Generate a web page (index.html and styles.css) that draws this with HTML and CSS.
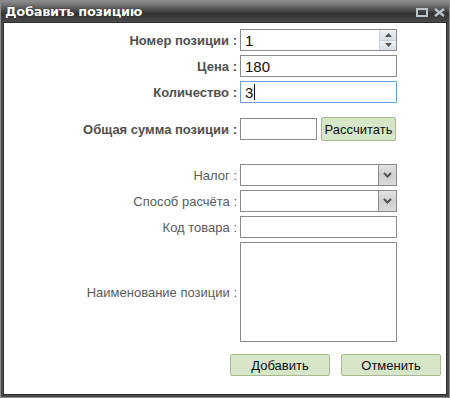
FILE: index.html
```html
<!DOCTYPE html>
<html lang="ru">
<head>
    <meta charset="UTF-8">
    <title>Добавить позицию</title>
    <link rel="stylesheet" href="styles.css">
</head>
<body>
<div class="window">
    <div class="title_bar">
        <span class="title">Добавить позицию</span>
        <span class="tools">
            <svg width="12" height="9" viewBox="0 0 12 9"><rect x="1" y="1" width="10" height="7" fill="none" stroke="#b9c3cc" stroke-width="2"/></svg>
            <svg width="11" height="9" viewBox="0 0 11 9"><path d="M1 1 L10 8 M10 1 L1 8" stroke="#b9c3cc" stroke-width="2.4"/></svg>
        </span>
    </div>
    <div class="panel">
        <div class="row">
            <label class="label strong">Номер позиции :</label>
            <div class="field spin_field">
                <span class="value">1</span>
                <div class="spinner">
                    <div class="spin_btn"><svg width="7" height="4"><path d="M0 4 L3.5 0 L7 4Z" fill="#555"/></svg></div>
                    <div class="spin_btn"><svg width="7" height="4"><path d="M0 0 L3.5 4 L7 0Z" fill="#555"/></svg></div>
                </div>
            </div>
        </div>
        <div class="row">
            <label class="label strong">Цена :</label>
            <div class="field"><span class="value">180</span></div>
        </div>
        <div class="row">
            <label class="label strong">Количество :</label>
            <div class="field focused"><span class="value">3</span><span class="caret"></span></div>
        </div>
        <div class="row row_total">
            <label class="label strong">Общая сумма позиции :</label>
            <div class="field small"></div>
            <div class="button calc">Рассчитать</div>
        </div>
        <div class="row row_tax">
            <label class="label">Налог :</label>
            <div class="field select">
                <div class="arrow"><svg width="9" height="6"><path d="M1 1 L4.5 4.5 L8 1" fill="none" stroke="#555" stroke-width="2"/></svg></div>
            </div>
        </div>
        <div class="row">
            <label class="label">Способ расчёта :</label>
            <div class="field select">
                <div class="arrow"><svg width="9" height="6"><path d="M1 1 L4.5 4.5 L8 1" fill="none" stroke="#555" stroke-width="2"/></svg></div>
            </div>
        </div>
        <div class="row">
            <label class="label">Код товара :</label>
            <div class="field"></div>
        </div>
        <div class="row">
            <label class="label">Наименование позиции :</label>
            <div class="field area"></div>
        </div>
        <div class="actions">
            <div class="button wide">Добавить</div>
            <div class="button wide">Отменить</div>
        </div>
    </div>
</div>
</body>
</html>
```

FILE: styles.css
```css
* {
    box-sizing: border-box;
}

body {
    margin: 0;
    font-family: "Liberation Sans", Arial, sans-serif;
}

.window {
    width: 450px;
    height: 398px;
    background: #4b4b4b;
    border: 1px solid #8a8a8a;
    display: flex;
    flex-direction: column;
}

.title_bar {
    height: 21px;
    display: flex;
    align-items: center;
    justify-content: space-between;
    padding: 0 4px 0 4px;
    background: linear-gradient(#8c8c8c, #5a5a5a 35%, #333 60%, #4a4a4a);
}

.title {
    color: white;
    font-family: "DejaVu Sans", sans-serif;
    font-weight: bold;
    font-size: 13px;
    letter-spacing: -0.3px;
    text-shadow: 0 0 1px #000;
}

.tools {
    display: flex;
    gap: 6px;
    align-items: center;
    padding-top: 2px;
}

.panel {
    flex: 1;
    margin: 0 2px 2px 2px;
    background: white;
    border: 1px solid #2e2e2e;
    padding-top: 6px;
    display: flex;
    flex-direction: column;
    gap: 4px;
}

.row {
    display: flex;
    align-items: center;
}

.row_total {
    margin-top: 10px;
}

.row_tax {
    margin-top: 19px;
}

.label {
    width: 234px;
    text-align: right;
    padding-right: 1px;
    margin-right: 2px;
    color: #5a5a5a;
    font-size: 13px;
}

.strong {
    font-weight: bold;
    color: #4f4f4f;
}

.field {
    position: relative;
    width: 157px;
    height: 22px;
    border: 1px solid #8a8a8a;
    background: white;
    display: flex;
    align-items: center;
    padding-left: 4px;
    font-size: 15px;
    color: #111;
}

.focused {
    border-color: #6f9fd8;
}

.caret {
    width: 1px;
    height: 16px;
    background: #000;
    margin-left: 1px;
}

.small {
    width: 77px;
}

.spinner {
    position: absolute;
    right: 0;
    top: 0;
    bottom: 0;
    width: 17px;
    display: flex;
    flex-direction: column;
    border-left: 1px solid #c8d0d8;
}

.spin_btn {
    flex: 1;
    display: flex;
    align-items: center;
    justify-content: center;
    background: linear-gradient(#eef2f6, #d6dde4);
    border-bottom: 1px solid #c8d0d8;
}

.spin_btn:last-child {
    border-bottom: none;
}

.select .arrow {
    position: absolute;
    right: 0;
    top: 0;
    bottom: 0;
    width: 18px;
    border-left: 1px solid #8a8a8a;
    background: linear-gradient(#e4e4e4, #cfcfcf 50%, #dadada);
    display: flex;
    align-items: center;
    justify-content: center;
}

.area {
    height: 100px;
}

.button {
    height: 24px;
    border: 1px solid #a9b88e;
    border-radius: 2px;
    background: #d6e6c9;
    display: flex;
    align-items: center;
    justify-content: center;
    font-size: 13px;
    color: #111;
}

.calc {
    width: 75px;
    margin-left: 4px;
}

.actions {
    display: flex;
    justify-content: flex-end;
    gap: 11px;
    padding-right: 5px;
    margin-top: 8px;
}

.wide {
    width: 100px;
    height: 22px;
}
```
